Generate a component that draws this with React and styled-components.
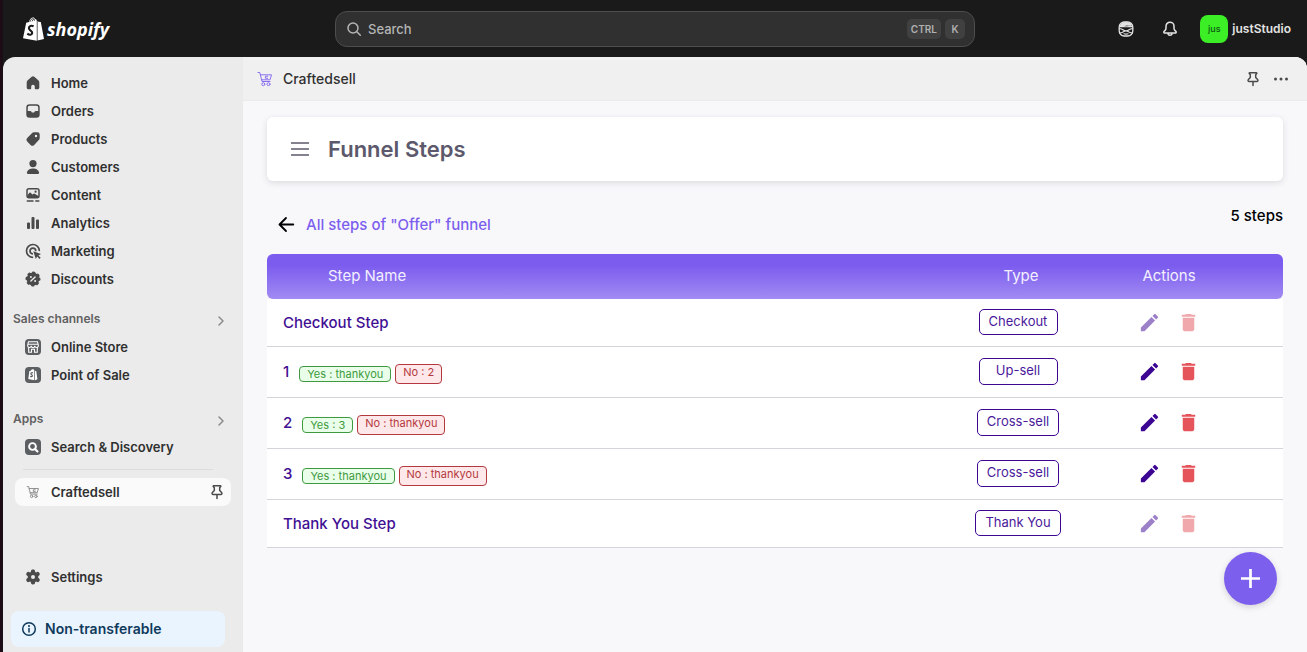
import React from "react";
import styled, { createGlobalStyle, css } from "styled-components";
import { MdEdit, MdDelete } from "react-icons/md";

const GlobalStyle = createGlobalStyle`
  *, *::before, *::after { box-sizing: border-box; }
  body {
    margin: 0;
    background: #1a1a1a;
    font-family: Inter, "Liberation Sans", sans-serif;
    color: #303030;
  }
  button { font: inherit; color: inherit; background: none; border: 0; padding: 0; cursor: pointer; }
  a { color: inherit; text-decoration: none; }
  svg { display: block; flex: none; }
`;

/* ---------- Shell ---------- */

const Shell = styled.div`
  display: flex;
  flex-direction: column;
  min-height: 100vh;
  border-left: 3px solid #1c0c16;
`;

const TopBar = styled.header`
  display: grid;
  grid-template-columns: 1fr minmax(200px, 640px) 1fr;
  align-items: center;
  height: 57px;
  padding: 0 16px;
  background: #1a1a1a;
`;

const Brand = styled.a`
  display: flex;
  align-items: center;
  gap: 3px;
  padding-left: 4px;
  color: #fff;
  font: italic 700 18px/28px "Open Sans", sans-serif;
`;

const SearchBox = styled.label`
  display: flex;
  align-items: center;
  gap: 4px;
  height: 36px;
  padding: 0 9px 0 8px;
  border: 1px solid #4d4d4d;
  border-radius: 12px;
  background: #303030;
  color: #b5b5b5;
`;

const SearchInput = styled.input`
  flex: 1;
  min-width: 0;
  padding: 0;
  border: 0;
  outline: 0;
  background: transparent;
  color: #e3e3e3;
  font: 450 13px/20px Inter, sans-serif;
  &::placeholder { color: #b5b5b5; opacity: 1; }
`;

const Key = styled.kbd`
  min-width: 20px;
  padding: 0 4px;
  border-radius: 5px;
  background: #404040;
  color: #b0b0b0;
  font: 600 10px/20px Inter, sans-serif;
  text-align: center;
`;

const TopActions = styled.div`
  display: flex;
  align-items: center;
  justify-content: flex-end;
  color: #e3e3e3;
`;

const IconButton = styled.button`
  display: grid;
  place-items: center;
  width: ${(p) => p.$size || 28}px;
  height: 28px;
`;

const Account = styled.button`
  display: flex;
  align-items: center;
  gap: 4px;
  margin-left: 8px;
  font-size: 12px;
  font-weight: 600;
  color: #e3e3e3;
`;

const Avatar = styled.span`
  width: 28px;
  border-radius: 8px;
  background: #3bee26;
  color: #0c5a12;
  font-size: 9px;
  font-weight: 500;
  line-height: 28px;
  text-align: center;
`;

const Body = styled.div`
  flex: 1;
  display: flex;
  border-radius: 12px 12px 0 0;
  overflow: hidden;
  background: #ebebeb;
`;

/* ---------- Sidebar ---------- */

const Sidebar = styled.nav`
  flex: none;
  display: flex;
  flex-direction: column;
  width: 240px;
  padding: 12px 12px 5px;
`;

const NavLink = styled.a`
  display: flex;
  align-items: center;
  gap: 8px;
  height: 28px;
  padding: 0 4px 0 8px;
  border-radius: 8px;
  color: #303030;
  font-size: 13px;
  font-weight: 600;
  ${(p) => p.$active && css`background: #fafafa;`}
  > svg { color: #4a4a4a; }
`;

const NavText = styled.span`
  flex: 1;
`;

const SectionTitle = styled.button`
  display: flex;
  align-items: center;
  justify-content: space-between;
  height: 28px;
  margin: ${(p) => p.$gap}px 0 0 -2px;
  padding-bottom: 2px;
  color: #616161;
  font-size: 12px;
  font-weight: 600;
  svg { color: #8a8a8a; }
`;

const Divider = styled.hr`
  width: 190px;
  height: 1px;
  margin: 8px 8px;
  border: 0;
  background: #dcdcdc;
`;

const SidebarFoot = styled.div`
  display: flex;
  flex-direction: column;
  gap: 20px;
  margin-top: auto;
`;

const Notice = styled.div`
  display: flex;
  align-items: center;
  gap: 6px;
  height: 36px;
  margin: 0 6px 0 -4px;
  padding: 0 8px;
  border-radius: 8px;
  background: #eaf4ff;
  color: #0f3a5c;
  font-size: 14px;
  font-weight: 600;
  line-height: 20px;
`;

/* ---------- App frame ---------- */

const Main = styled.main`
  flex: 1;
  min-width: 0;
  display: flex;
  flex-direction: column;
  background: #f8f8fb;
`;

const AppBar = styled.div`
  display: flex;
  align-items: center;
  height: 44px;
  padding: 0 12px;
  border-bottom: 1px solid #ebebeb;
  background: #f0f0f0;
  color: #4a4a4a;
`;

const AppLogo = styled.span`
  color: #8b6ff0;
`;

const AppName = styled.span`
  flex: 1;
  padding-left: 8px;
  color: #303030;
  font-size: 14px;
  font-weight: 500;
`;

const Page = styled.div`
  padding: 16px 24px;
`;

const TitleCard = styled.section`
  display: flex;
  align-items: center;
  gap: 13px;
  height: 64px;
  padding: 0 20px;
  border-radius: 6px;
  background: #fff;
  box-shadow: 0 2px 6px rgba(58, 53, 65, 0.14);
  color: #85818f;
`;

const Title = styled.h1`
  margin: 0;
  color: #5d596c;
  font-size: 22px;
  font-weight: 600;
  line-height: 32px;
`;

const SubHeader = styled.div`
  display: flex;
  justify-content: space-between;
  align-items: flex-start;
  height: 73px;
  padding: 24px 0 0 9px;
`;

const BackLink = styled.a`
  display: flex;
  align-items: center;
  gap: 10px;
  margin-top: 9px;
  color: #7d5fee;
  font-size: 15px;
  font-weight: 500;
  line-height: 22px;
  svg { color: #000; }
`;

const Count = styled.span`
  color: #000;
  font-size: 15px;
  font-weight: 500;
  line-height: 22px;
`;

const Table = styled.table`
  width: 100%;
  border-collapse: separate;
  border-spacing: 0;
  table-layout: fixed;
`;

const HeadCell = styled.th`
  width: ${(p) => (p.$width ? p.$width + "px" : "auto")};
  height: 45px;
  padding: 0 ${(p) => p.$right || 0}px 2px ${(p) => p.$left || 0}px;
  background: linear-gradient(#7b5cee 25%, #a28bf3);
  color: #f3efff;
  font-size: 15px;
  font-weight: 400;
  text-align: ${(p) => (p.$start ? "left" : "center")};
  &:first-child { border-radius: 6px 0 0 6px; }
  &:last-child { border-radius: 0 6px 6px 0; }
`;

const Cell = styled.td`
  height: ${(p) => (p.$tall ? 51 : 48)}px;
  padding: 0 ${(p) => p.$right || 0}px ${(p) => p.$bottom || 0}px ${(p) => p.$left || 0}px;
  border-bottom: 1px solid #d5d4da;
  background: #fff;
`;

const StepLine = styled.div`
  display: flex;
  align-items: center;
  gap: 4px;
`;

const StepName = styled.span`
  margin-right: 6px;
  color: #3f0f94;
  font-size: 15px;
  font-weight: 500;
  line-height: 22px;
`;

const Outcome = styled.span`
  margin-top: 4px;
  padding: 0 7px;
  border: 1px solid;
  border-radius: 4px;
  font-size: 11px;
  line-height: 14px;
  ${(p) =>
    p.$no
      ? css`
          padding-bottom: 4px;
          border-color: #b3393f;
          background: #ffe8e9;
          color: #b3393f;
        `
      : css`
          border-color: #3f9a3f;
          background: #eaffea;
          color: #3f9a3f;
        `}
`;

const TypeBadge = styled.span`
  display: block;
  width: fit-content;
  min-width: 79px;
  height: ${(p) => (p.$tall ? 27 : 26)}px;
  margin: 0 auto;
  padding: 0 9px;
  border: 1px solid #3c0693;
  border-radius: 5px;
  color: #4a1a9b;
  font-size: 13px;
  line-height: 23px;
  text-align: center;
`;

const RowActions = styled.div`
  display: flex;
  justify-content: center;
  gap: 16px;
`;

const ActionButton = styled.button`
  color: ${(p) => p.$color};
  &:disabled { opacity: 0.5; }
`;

const AddButton = styled.button`
  position: fixed;
  right: 30px;
  bottom: 47px;
  display: grid;
  place-items: center;
  width: 53px;
  height: 53px;
  border-radius: 50%;
  background: #7d5fee;
  color: #fff;
  box-shadow: 0 2px 6px rgba(58, 53, 65, 0.2);
`;

/* ---------- Icons ---------- */

const Svg = ({ size = 20, children, ...rest }) => (
  <svg width={size} height={size} viewBox="0 0 20 20" fill="currentColor" aria-hidden="true" {...rest}>
    {children}
  </svg>
);

const line = { fill: "none", stroke: "currentColor", strokeWidth: 1.5, strokeLinecap: "round", strokeLinejoin: "round" };

const HomeIcon = () => (
  <Svg><path d="M8.700 3.700a2 2 0 0 1 2.600 0l4 3.500a3 3 0 0 1 1 2.300v4.900c0 1-.8 1.800-1.800 1.800h-1.900a.8.8 0 0 1-.8-.8v-1.900a1.800 1.800 0 0 0-3.600 0v1.900c0 .4-.4.8-.8.8H5.500c-1 0-1.800-.8-1.800-1.800V9.500a3 3 0 0 1 1-2.300z" /></Svg>
);
const OrdersIcon = () => (
  <Svg><path fillRule="evenodd" d="M6.500 3.300h7a3.200 3.200 0 0 1 3.200 3.200v7a3.200 3.200 0 0 1-3.200 3.200h-7a3.200 3.200 0 0 1-3.200-3.200v-7a3.200 3.200 0 0 1 3.200-3.200zM6.500 4.800A1.700 1.700 0 0 0 4.800 6.500V10h2.400c.6 0 1 .3 1.300.8l.2.4c.1.200.3.300.5.300h1.600c.2 0 .4-.1.500-.3l.2-.4c.3-.5.7-.8 1.300-.8h2.400V6.500a1.700 1.700 0 0 0-1.700-1.700z" /></Svg>
);
const ProductsIcon = () => (
  <Svg><path fillRule="evenodd" d="M11 3.300h3.500a2.200 2.200 0 0 1 2.200 2.200V9a3 3 0 0 1-.9 2.100l-4.600 4.800a2.600 2.600 0 0 1-3.600 0l-3.400-3.300a2.600 2.600 0 0 1 0-3.600l4.700-4.800A3 3 0 0 1 11 3.300zM13 8.200a1.200 1.200 0 1 0 0-2.400 1.200 1.200 0 0 0 0 2.400z" /></Svg>
);
const CustomersIcon = () => (
  <Svg><circle cx="10" cy="6.600" r="3.600" /><path d="M3.900 15.600C4.300 13 7 11.500 10 11.500s5.700 1.500 6.100 4.100c.1.700-.4 1.300-1.100 1.300H5c-.7 0-1.200-.6-1.100-1.300z" /></Svg>
);
const ContentIcon = () => (
  <Svg>
    <rect x="4" y="3.700" width="12" height="9" rx="2" {...line} />
    <path d="M4.500 10 7 7.300l2.500 2.300 1.700-1.200 4.300 2.600v1.700h-11z" />
    <circle cx="12.600" cy="6.700" r="1.100" />
    <path d="M4.300 16h5.700M12.800 16h3" {...line} />
  </Svg>
);
const AnalyticsIcon = () => (
  <Svg><rect x="4" y="9.500" width="3" height="6.500" rx="1" /><rect x="8.500" y="4" width="3" height="12" rx="1" /><rect x="13" y="6.500" width="3" height="9.500" rx="1" /></Svg>
);
const MarketingIcon = () => (
  <Svg>
    <path d="M16.300 9.500A6.400 6.400 0 1 0 9.500 16.300" {...line} strokeWidth="1.700" />
    <path d="M12.800 9.500A2.900 2.900 0 1 0 9.300 12.800" {...line} strokeWidth="1.700" />
    <path d="M10.300 10.300l7.700 2.600-2.600 1.500 2.300 2.300-1.200 1.200-2.300-2.300-1.400 2.400z" />
  </Svg>
);
const DiscountsIcon = () => (
  <Svg>
    <circle cx="10" cy="10" r="6.400" />
    <circle cx="10" cy="10" r="6.300" fill="none" stroke="currentColor" strokeWidth="2.400" strokeLinecap="round" strokeDasharray="1.200 3.748" strokeDashoffset="0.600" />
    <path d="m7.900 12.100 4.200-4.200" stroke="#ebebeb" strokeWidth="1.400" strokeLinecap="round" />
    <circle cx="7.900" cy="8" r="1" fill="#ebebeb" /><circle cx="12.100" cy="12" r="1" fill="#ebebeb" />
  </Svg>
);
const StoreIcon = () => (
  <Svg>
    <rect x="2" y="2" width="16" height="16" rx="4" fill="#5c5f62" />
    <g fill="none" stroke="#fff" strokeWidth="1.100"><path d="M5.500 4.700h9l.8 3.300v.8a1.700 1.700 0 0 1-3.500 0 1.800 1.800 0 0 1-3.600 0 1.700 1.700 0 0 1-3.500 0V8zM4.800 7.300h10.400M5.700 10.500v4.800h2.800v-3h3v3h2.800v-4.800" /></g>
  </Svg>
);
const PosIcon = () => (
  <Svg>
    <rect x="2" y="2" width="16" height="16" rx="4" fill="#5c5f62" />
    <path d="M6.300 6.200 8 5.600C8.400 4.500 9.300 4 10 4.200c.7-.1 1.100.6 1.300 1.100v9.900l-6-1.100z" fill="#fff" />
    <path d="M12 5.800l1.300.4 1.100 8.100-2.400.9z" fill="#fff" />
    <path d="M10 8c-1-.6-2.200-.3-2.200.6 0 1.100 1.700 1.200 1.600 2.300-.1.800-1.200 1-2.100.3" fill="none" stroke="#5c5f62" strokeWidth="1.200" />
  </Svg>
);
const DiscoveryIcon = () => (
  <Svg>
    <rect x="2" y="2" width="16" height="16" rx="4" fill="#5c5f62" />
    <circle cx="9.500" cy="9.500" r="3.400" fill="none" stroke="#fff" strokeWidth="1.900" />
    <path d="m12.200 12.200 2.300 2.300" stroke="#fff" strokeWidth="2.100" strokeLinecap="round" />
  </Svg>
);
const CartShape = () => (
  <g fill="none" stroke="currentColor" strokeLinecap="round" strokeLinejoin="round">
    <path d="M3 3.500h1.800l2.200 9h8M5.500 5.800h11l-1.500 5H6.700" />
    <path d="M12.700 7.300h-2.300v2h2.300" />
    <circle cx="8.300" cy="15.200" r="1.500" /><circle cx="13.500" cy="15.200" r="1.500" />
  </g>
);
const CartIcon = () => (
  <Svg><CartShape /></Svg>
);
const SmallCartIcon = () => (
  <Svg viewBox="-2 -2 24 24" opacity="0.7"><CartShape /></Svg>
);
const PinIcon = () => (
  <Svg><path d="M6.700 3.700h6.600c.5 0 .7.500.4.900l-1 1.200v2.700l1.900 2c.8.800.3 2-.8 2H6.200c-1.100 0-1.600-1.200-.8-2l1.900-2V5.800l-1-1.200c-.3-.4-.1-.9.400-.9zM10 12.700v3.800" {...line} /></Svg>
);
const GearIcon = () => (
  <Svg viewBox="1 0.600 18 18"><path fillRule="evenodd" d="M8.200 4.100c.1-.8.700-1.300 1.500-1.300h.6c.8 0 1.400.5 1.500 1.300l.2 1 .7.400 1-.4c.7-.3 1.500 0 1.900.7l.3.500c.4.600.2 1.500-.4 1.900l-.8.700v1.400l.8.700c.6.500.8 1.300.4 1.900l-.3.500c-.4.700-1.200 1-1.900.7l-1-.4-.7.400-.2 1c-.1.800-.7 1.300-1.500 1.300h-.6c-.8 0-1.400-.5-1.500-1.300l-.2-1-.7-.4-1 .4c-.7.300-1.500 0-1.900-.7l-.3-.5c-.4-.6-.2-1.400.4-1.900l.8-.7V8.900l-.8-.7c-.6-.4-.8-1.300-.4-1.900l.3-.5c.4-.7 1.200-1 1.900-.7l1 .4.700-.4zM10 11.400a1.800 1.800 0 1 0 0-3.600 1.800 1.800 0 0 0 0 3.600z" /></Svg>
);
const InfoIcon = () => (
  <Svg><circle cx="10" cy="10" r="6.300" {...line} /><path d="M10 9.500v3.500" {...line} /><circle cx="10" cy="7" r="1" /></Svg>
);
const ChevronIcon = () => (
  <Svg><path d="m8 9 4 4-4 4" {...line} /></Svg>
);
const SearchIcon = () => (
  <Svg><circle cx="9" cy="9" r="5" {...line} /><path d="m12.800 12.800 3.500 3.500" {...line} /></Svg>
);
const BellIcon = () => (
  <Svg><path d="M10 3.200a4 4 0 0 0-4 4v2c0 .8-.3 1.500-.9 2.200l-1.100 1.100c-.5.700 0 1.500.8 1.500h10.400c.8 0 1.300-.8.800-1.500l-1.100-1.100a3.400 3.400 0 0 1-.9-2.200v-2a4 4 0 0 0-4-4zM8 14.300a2 2 0 0 0 4 0" {...line} /></Svg>
);
const AssistantIcon = () => (
  <Svg>
    <rect x="3.200" y="3" width="13.600" height="14" rx="5" {...line} strokeWidth="1.300" />
    <path d="M3.400 8.300C4 4.500 7 2.900 10 2.900s5 1 6 3c-1.600.9-3.200 1-5 .6M6 6.200c2 .9 5 1.500 10.400.3v1.800H3.400z" />
    <path d="M3.400 9.500c2 .1 2.800.6 4 1.500.8.600 1.600.8 2.600.8s1.800-.2 2.600-.8c1.200-.9 2-1.400 4-1.500M3.700 14c2 0 3-.3 4-1.300.7-.7 1.300-.9 2.300-.9s1.600.2 2.300.9c1 1 2 1.300 4 1.300M8 14.800c1.200.5 2.800.5 4 0" {...line} strokeWidth="1.200" />
  </Svg>
);
const DotsIcon = () => (
  <Svg><circle cx="4.500" cy="10" r="1.500" /><circle cx="10" cy="10" r="1.500" /><circle cx="15.500" cy="10" r="1.500" /></Svg>
);
const BagLogo = () => (
  <svg width="21" height="24" viewBox="0 0 21 24" aria-hidden="true">
    <path d="M3.200 5.800 6 5C6.700 2 8.500.4 10.200.5c.9 0 1.500.6 1.900 1.400 1 0 1.500.9 1.700 1.700v20.200L0 21.300z" fill="#fff" />
    <path d="M14.500 3.800l.9.900 2.400.2L21 21.900l-6.500 1.700z" fill="#fff" />
    <path d="M7 4.800C7.600 2.800 8.800 1.700 9.900 1.600M9.200 4.300c.3-1.300 1-2.200 2-2.600M10.600 1.500c.7.600.9 1.400.9 2.200" fill="none" stroke="#1a1a1a" strokeWidth=".8" />
    <path d="M10.600 9.300C8.300 8.200 5.900 9 5.900 11c0 2.600 3.400 2.500 3.300 5-.1 2-2.700 2.400-4.900.7" fill="none" stroke="#1a1a1a" strokeWidth="2.100" />
  </svg>
);
const MenuIcon = () => (
  <svg width="26" height="26" viewBox="0 0 26 26" aria-hidden="true"><path d="M3 7h18M3 13h18M3 19h18" stroke="currentColor" strokeWidth="2" /></svg>
);
const ArrowIcon = () => (
  <Svg {...line} strokeWidth="1.800"><path d="M17.300 9.500H3.500M10 3 3.500 9.500 10 16" /></Svg>
);
const PlusIcon = () => (
  <svg width="19" height="19" viewBox="0 0 19 19" aria-hidden="true"><path d="M9.500 0v19M0 9.500h19" stroke="currentColor" strokeWidth="2.700" /></svg>
);

/* ---------- Data ---------- */

const primaryNav = [
  ["Home", HomeIcon],
  ["Orders", OrdersIcon],
  ["Products", ProductsIcon],
  ["Customers", CustomersIcon],
  ["Content", ContentIcon],
  ["Analytics", AnalyticsIcon],
  ["Marketing", MarketingIcon],
  ["Discounts", DiscountsIcon],
];

const steps = [
  { name: "Checkout Step", type: "Checkout", locked: true },
  { name: "1", yes: "thankyou", no: "2", type: "Up-sell" },
  { name: "2", yes: "3", no: "thankyou", type: "Cross-sell" },
  { name: "3", yes: "thankyou", no: "thankyou", type: "Cross-sell" },
  { name: "Thank You Step", type: "Thank You", locked: true },
];

const NavItem = ({ label, icon: Icon, active, children }) => (
  <NavLink href="#" $active={active} aria-current={active ? "page" : undefined}>
    <Icon />
    <NavText>{label}</NavText>
    {children}
  </NavLink>
);

const StepRow = ({ step }) => (
  <tr>
    <Cell $left={16} $tall={!step.locked}>
      <StepLine>
        <StepName>{step.name}</StepName>
        {step.yes && <Outcome>Yes : {step.yes}</Outcome>}
        {step.no && <Outcome $no>No : {step.no}</Outcome>}
      </StepLine>
    </Cell>
    <Cell $right={2} $bottom={step.locked ? 2 : 1}>
      <TypeBadge $tall={!step.locked}>{step.type}</TypeBadge>
    </Cell>
    <Cell $right={29} $bottom={step.locked ? 0 : 2}>
      <RowActions>
        <ActionButton $color="#3c0693" disabled={step.locked} aria-label={`Edit ${step.name}`}>
          <MdEdit size={23} />
        </ActionButton>
        <ActionButton $color="#e5535b" disabled={step.locked} aria-label={`Delete ${step.name}`}>
          <MdDelete size={23} />
        </ActionButton>
      </RowActions>
    </Cell>
  </tr>
);

export default function App() {
  return (
    <Shell>
      <GlobalStyle />
      <TopBar>
        <Brand href="#">
          <BagLogo />
          shopify
        </Brand>
        <SearchBox>
          <SearchIcon />
          <SearchInput type="text" placeholder="Search" aria-label="Search" />
          <Key>CTRL</Key>
          <Key>K</Key>
        </SearchBox>
        <TopActions>
          <IconButton $size={44} aria-label="Assistant"><AssistantIcon /></IconButton>
          <IconButton $size={44} aria-label="Notifications"><BellIcon /></IconButton>
          <Account>
            <Avatar>jus</Avatar>
            justStudio
          </Account>
        </TopActions>
      </TopBar>

      <Body>
        <Sidebar>
          {primaryNav.map(([label, icon]) => (
            <NavItem key={label} label={label} icon={icon} />
          ))}
          <SectionTitle $gap={12}>Sales channels<ChevronIcon /></SectionTitle>
          <NavItem label="Online Store" icon={StoreIcon} />
          <NavItem label="Point of Sale" icon={PosIcon} />
          <SectionTitle $gap={16}>Apps<ChevronIcon /></SectionTitle>
          <NavItem label="Search &amp; Discovery" icon={DiscoveryIcon} />
          <Divider />
          <NavItem label="Craftedsell" icon={SmallCartIcon} active>
            <PinIcon />
          </NavItem>
          <SidebarFoot>
            <NavItem label="Settings" icon={GearIcon} />
            <Notice>
              <InfoIcon />
              Non-transferable
            </Notice>
          </SidebarFoot>
        </Sidebar>

        <Main>
          <AppBar>
            <AppLogo><CartIcon /></AppLogo>
            <AppName>Craftedsell</AppName>
            <IconButton aria-label="Pin app"><PinIcon /></IconButton>
            <IconButton aria-label="More actions"><DotsIcon /></IconButton>
          </AppBar>
          <Page>
            <TitleCard>
              <IconButton aria-label="Open menu"><MenuIcon /></IconButton>
              <Title>Funnel Steps</Title>
            </TitleCard>
            <SubHeader>
              <BackLink href="#">
                <ArrowIcon />
                All steps of "Offer" funnel
              </BackLink>
              <Count>5 steps</Count>
            </SubHeader>
            <Table>
              <thead>
                <tr>
                  <HeadCell $start $left={61}>Step Name</HeadCell>
                  <HeadCell $width={130} $left={4}>Type</HeadCell>
                  <HeadCell $width={199} $right={29}>Actions</HeadCell>
                </tr>
              </thead>
              <tbody>
                {steps.map((step) => (
                  <StepRow key={step.name} step={step} />
                ))}
              </tbody>
            </Table>
          </Page>
        </Main>
      </Body>
      <AddButton aria-label="Add step"><PlusIcon /></AddButton>
    </Shell>
  );
}
